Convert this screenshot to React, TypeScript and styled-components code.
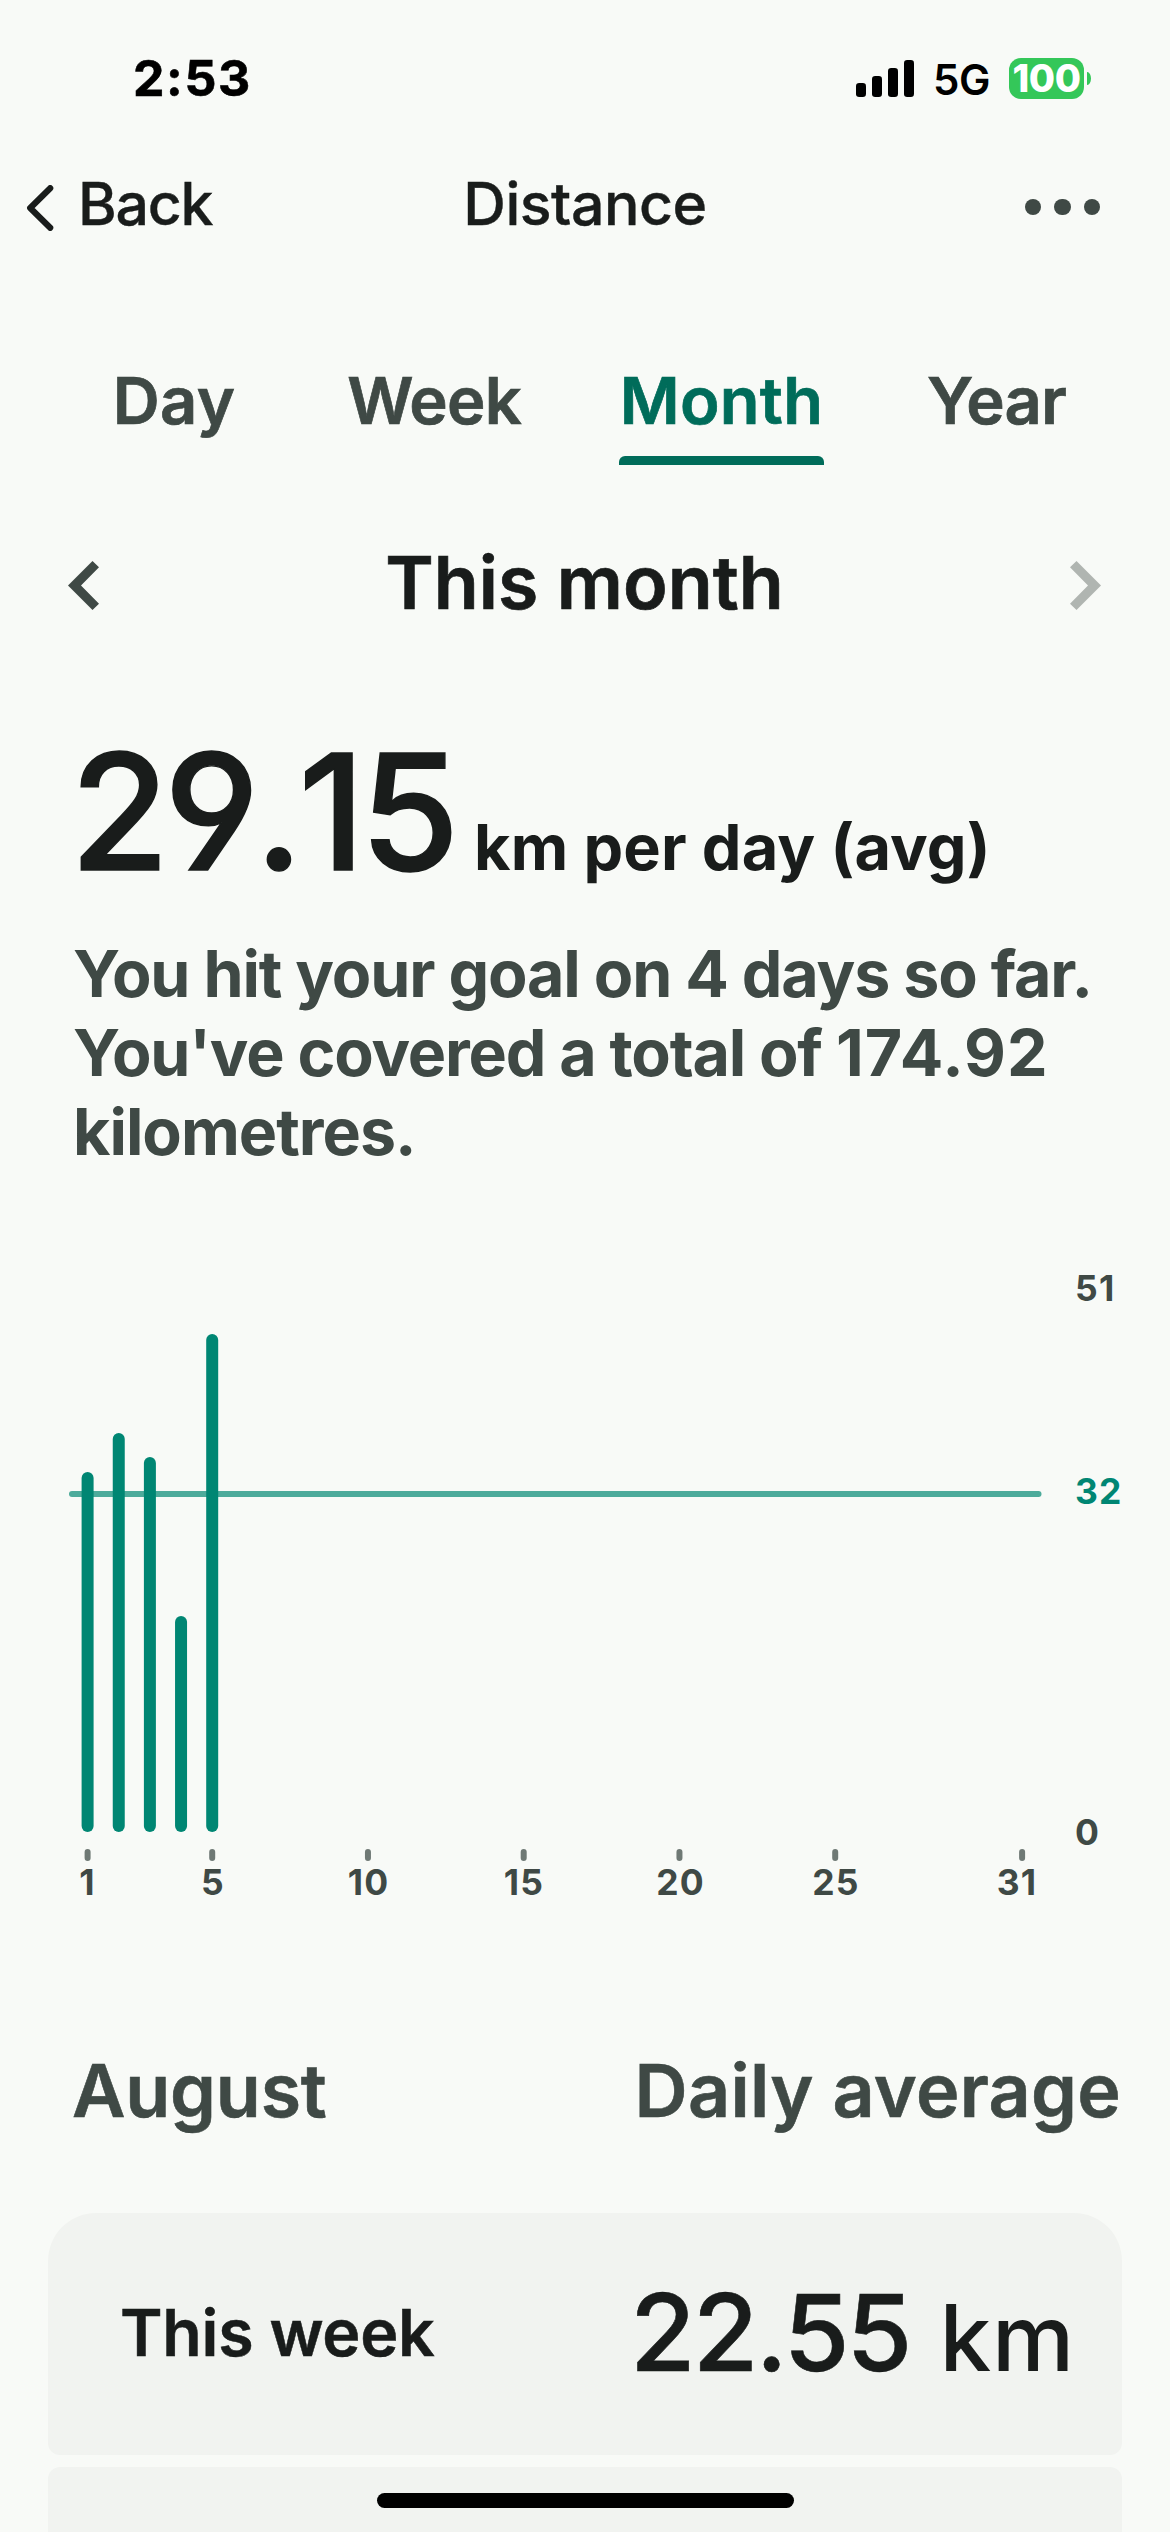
import React from "react";
import styled, { createGlobalStyle } from "styled-components";

const color = {
  bg: "#f8faf7",
  card: "#f1f3f0",
  ink: "#191c1b",
  soft: "#3f4945",
  brand: "#006c5a",
  bar: "#008673",
  goal: "#4dab9b",
  tick: "#6f7975",
  disabled: "#b0b5b1",
  battery: "#34c759",
};

const GlobalStyle = createGlobalStyle`
  *, *::before, *::after { box-sizing: border-box; }
  body { margin: 0; background: ${color.bg}; }
`;

const Screen = styled.div`
  position: relative;
  display: flex;
  flex-direction: column;
  width: 1170px;
  height: 2532px;
  overflow: hidden;
  background: ${color.bg};
  color: ${color.ink};
  font-family: Inter, "Liberation Sans", sans-serif;
  white-space: nowrap;

  > * {
    flex-shrink: 0;
  }
`;

const Text = styled.span<{ $size: number; $weight?: number; $track?: number; $stroke?: number }>`
  display: block;
  margin: 0;
  font-size: ${(p) => p.$size}px;
  font-weight: ${(p) => p.$weight ?? 600};
  letter-spacing: ${(p) => p.$track ?? 0}px;
  -webkit-text-stroke: ${(p) => p.$stroke ?? 0}px currentColor;
`;

const StatusBar = styled.div`
  display: flex;
  align-items: center;
  justify-content: space-between;
  height: 156px;
  padding: 0 79px 0 133px;
  color: #000;
`;

const StatusIcons = styled.div`
  display: flex;
  align-items: center;
`;

const Network = styled(Text)`
  margin: 2px 0 0 19px;
  width: 76px;
`;

const Battery = styled.div`
  display: flex;
  align-items: center;
  justify-content: center;
  width: 75px;
  height: 41px;
  border-radius: 12px;
  background: ${color.battery};
  color: #fff;
`;

const BatteryNub = styled.div`
  width: 4px;
  height: 13px;
  margin-left: 3px;
  border-radius: 0 4px 4px 0 / 0 7px 7px 0;
  background: ${color.battery};
`;

const NavBar = styled.header`
  display: grid;
  grid-template-columns: 1fr auto 1fr;
  align-items: center;
  height: 95px;
  padding: 0 70px 0 26px;
`;

const BackButton = styled.div`
  display: flex;
  align-items: center;
  gap: 23px;

  svg {
    margin-top: 8px;
  }
`;

const NavTitle = styled(Text)`
  padding-left: 44px;
`;

const MenuButton = styled.div`
  display: flex;
  justify-content: flex-end;
  gap: 13px;
  padding-top: 7px;
`;

const MenuDot = styled.i`
  width: 16.5px;
  height: 16.5px;
  border-radius: 50%;
  background: ${color.soft};
`;

const Tabs = styled.nav`
  display: grid;
  grid-template-columns: 260px 260px 315px 235px;
  padding: 110px 0 0 44px;
  height: 214px;
`;

const Tab = styled.div<{ $active?: boolean }>`
  display: flex;
  flex-direction: column;
  align-items: center;
  gap: 16px;
  line-height: 79px;
  color: ${(p) => (p.$active ? color.brand : color.soft)};
`;

const TabIndicator = styled.div`
  width: 205px;
  height: 9px;
  border-radius: 6px 6px 0 0;
  background: ${color.brand};
`;

const Period = styled.div`
  display: flex;
  align-items: center;
  justify-content: space-between;
  height: 235px;
  padding: 0 69px 0 68px;

  svg {
    margin-top: 6px;
  }
`;

const Metric = styled.div`
  display: flex;
  align-items: baseline;
  margin: 14px 0 0 70px;
  line-height: 195px;
  height: 195px;
`;

const MetricValue = styled(Text)`
  width: 404px;
  font-feature-settings: "cv04";
  font-kerning: none;
`;

const Summary = styled.div`
  margin: 26px 0 0 73px;
  height: 237px;
  line-height: 79px;
  color: ${color.soft};
`;

const Figure = styled.span`
  letter-spacing: 1.1px;
`;

const Chart = styled.svg`
  display: block;
  margin-top: 78px;
  font-size: 35.5px;
  font-weight: 700;
  letter-spacing: 1.2px;
`;

const SectionHeader = styled.div`
  display: flex;
  align-items: center;
  justify-content: space-between;
  height: 120px;
  margin: 120px 0 63px;
  padding: 0 49px 0 72px;
  color: ${color.soft};
`;

const WeekList = styled.div`
  display: flex;
  flex-direction: column;
  gap: 12px;
  padding: 0 48px;
`;

const WeekCard = styled.div<{ $first?: boolean }>`
  display: flex;
  align-items: center;
  justify-content: space-between;
  height: 242px;
  padding: 0 47px 3px 72px;
  border-radius: ${(p) => (p.$first ? "48px 48px" : "12px 12px")} 12px 12px;
  background: ${color.card};
`;

const WeekValue = styled.div`
  display: flex;
  align-items: baseline;
  gap: 30px;
`;

const HomeIndicator = styled.div`
  position: absolute;
  left: 377px;
  bottom: 24px;
  width: 417px;
  height: 15px;
  border-radius: 8px;
  background: #000;
`;

const DAY_STEP = 31.15;
const dayX = (day: number) => 87.6 + (day - 1) * DAY_STEP;
const BASELINE = 582;

const bars = [
  { day: 1, height: 360 },
  { day: 2, height: 399 },
  { day: 3, height: 375 },
  { day: 4, height: 216 },
  { day: 5, height: 498 },
];

const ticks = [
  { day: 1, x: 87.5 },
  { day: 5, x: 213 },
  { day: 10, x: 368.5 },
  { day: 15, x: 524 },
  { day: 20, x: 680.5 },
  { day: 25, x: 836 },
  { day: 31, x: 1017 },
];

const DistanceChart = () => (
  <Chart width="1170" height="660" viewBox="0 0 1170 660">
    <rect x="69" y="241" width="972.5" height="6" rx="3" fill={color.goal} />
    {bars.map((b) => (
      <rect key={b.day} x={dayX(b.day) - 6} y={BASELINE - b.height} width="12" height={b.height} rx="6" fill={color.bar} />
    ))}
    {ticks.map((t) => (
      <g key={t.day}>
        <rect x={dayX(t.day) - 3} y="599" width="6" height="12" rx="3" fill={color.tick} />
        <text x={t.x} y="645" textAnchor="middle" fill={color.soft}>{t.day}</text>
      </g>
    ))}
    <text x="1075" y="51" fill={color.soft}>51</text>
    <text x="1075" y="254" fill={color.bar}>32</text>
    <text x="1075" y="594.5" fill={color.soft}>0</text>
  </Chart>
);

const SignalIcon = () => (
  <svg width="58" height="37" viewBox="0 0 58 37">
    <rect x="0" y="23" width="10" height="14" rx="3.2" />
    <rect x="16" y="16" width="10" height="21" rx="3.2" />
    <rect x="32" y="8" width="10" height="29" rx="3.2" />
    <rect x="48" y="0" width="10" height="37" rx="3.2" />
  </svg>
);

const BackIcon = () => (
  <svg width="29" height="46" viewBox="0 0 29 46" fill="none">
    <path d="M24.2 3.2 L4.2 23 L24.2 42.8" stroke={color.ink} strokeWidth="6.2" strokeLinecap="round" strokeLinejoin="round" />
  </svg>
);

const Chevron = ({ flip, fill }: { flip?: boolean; fill: string }) => (
  <svg width="31" height="49" viewBox="0 0 31 49">
    <path
      d="M24.5 0 L31 6.3 L13 24.5 L31 42.7 L24.5 49 L0 24.5 Z"
      fill={fill}
      transform={flip ? "translate(31 0) scale(-1 1)" : undefined}
    />
  </svg>
);

export default function App() {
  return (
    <Screen>
      <GlobalStyle />
      <StatusBar>
        <Text $size={50} $weight={700} $track={1.6} $stroke={0.6}>2:53</Text>
        <StatusIcons>
          <SignalIcon />
          <Network $size={42} $track={-0.4}>5G</Network>
          <Battery>
            <Text $size={38} $weight={800} $track={-0.5}>100</Text>
          </Battery>
          <BatteryNub />
        </StatusIcons>
      </StatusBar>

      <NavBar>
        <BackButton>
          <BackIcon />
          <Text $size={59} $weight={500} $track={-1.3} $stroke={0.4}>Back</Text>
        </BackButton>
        <NavTitle as="h1" $size={59} $weight={500} $track={-0.5} $stroke={0.4}>Distance</NavTitle>
        <MenuButton>
          <MenuDot />
          <MenuDot />
          <MenuDot />
        </MenuButton>
      </NavBar>

      <Tabs>
        <Tab><Text $size={65} $track={0.4} $stroke={0.7}>Day</Text></Tab>
        <Tab><Text $size={65} $track={-0.8} $stroke={0.7}>Week</Text></Tab>
        <Tab $active>
          <Text $size={65} $track={0.3} $stroke={0.7}>Month</Text>
          <TabIndicator />
        </Tab>
        <Tab><Text $size={65} $track={-0.8} $stroke={0.7}>Year</Text></Tab>
      </Tabs>

      <Period>
        <Chevron fill={color.soft} />
        <Text $size={73.5} $track={0} $stroke={0.7}>This month</Text>
        <Chevron fill={color.disabled} flip />
      </Period>

      <Metric>
        <MetricValue $size={161} $weight={500} $track={-5.1} $stroke={1.4}>29.15</MetricValue>
        <Text $size={63} $weight={700} $track={0.15}>km per day (avg)</Text>
      </Metric>

      <Summary>
        <Text $size={64.5} $weight={700} $track={-1.16}>You hit your goal on 4 days so far.</Text>
        <Text $size={64.5} $weight={700} $track={-1.2}>You've covered a total of <Figure>174.92</Figure></Text>
        <Text $size={64.5} $weight={700} $track={-1}>kilometres.</Text>
      </Summary>

      <DistanceChart />

      <SectionHeader>
        <Text $size={73.5} $track={-0.2} $stroke={0.6}>August</Text>
        <Text $size={73.5} $track={0.3} $stroke={0.6}>Daily average</Text>
      </SectionHeader>

      <WeekList>
        <WeekCard $first>
          <Text $size={64.5} $track={-0.25} $stroke={0.5}>This week</Text>
          <WeekValue>
            <Text $size={106.5} $weight={500} $track={-2.9} $stroke={0.6}>22.55</Text>
            <Text $size={92.5} $weight={500} $track={0.8}>km</Text>
          </WeekValue>
        </WeekCard>
        <WeekCard />
      </WeekList>

      <HomeIndicator />
    </Screen>
  );
}
